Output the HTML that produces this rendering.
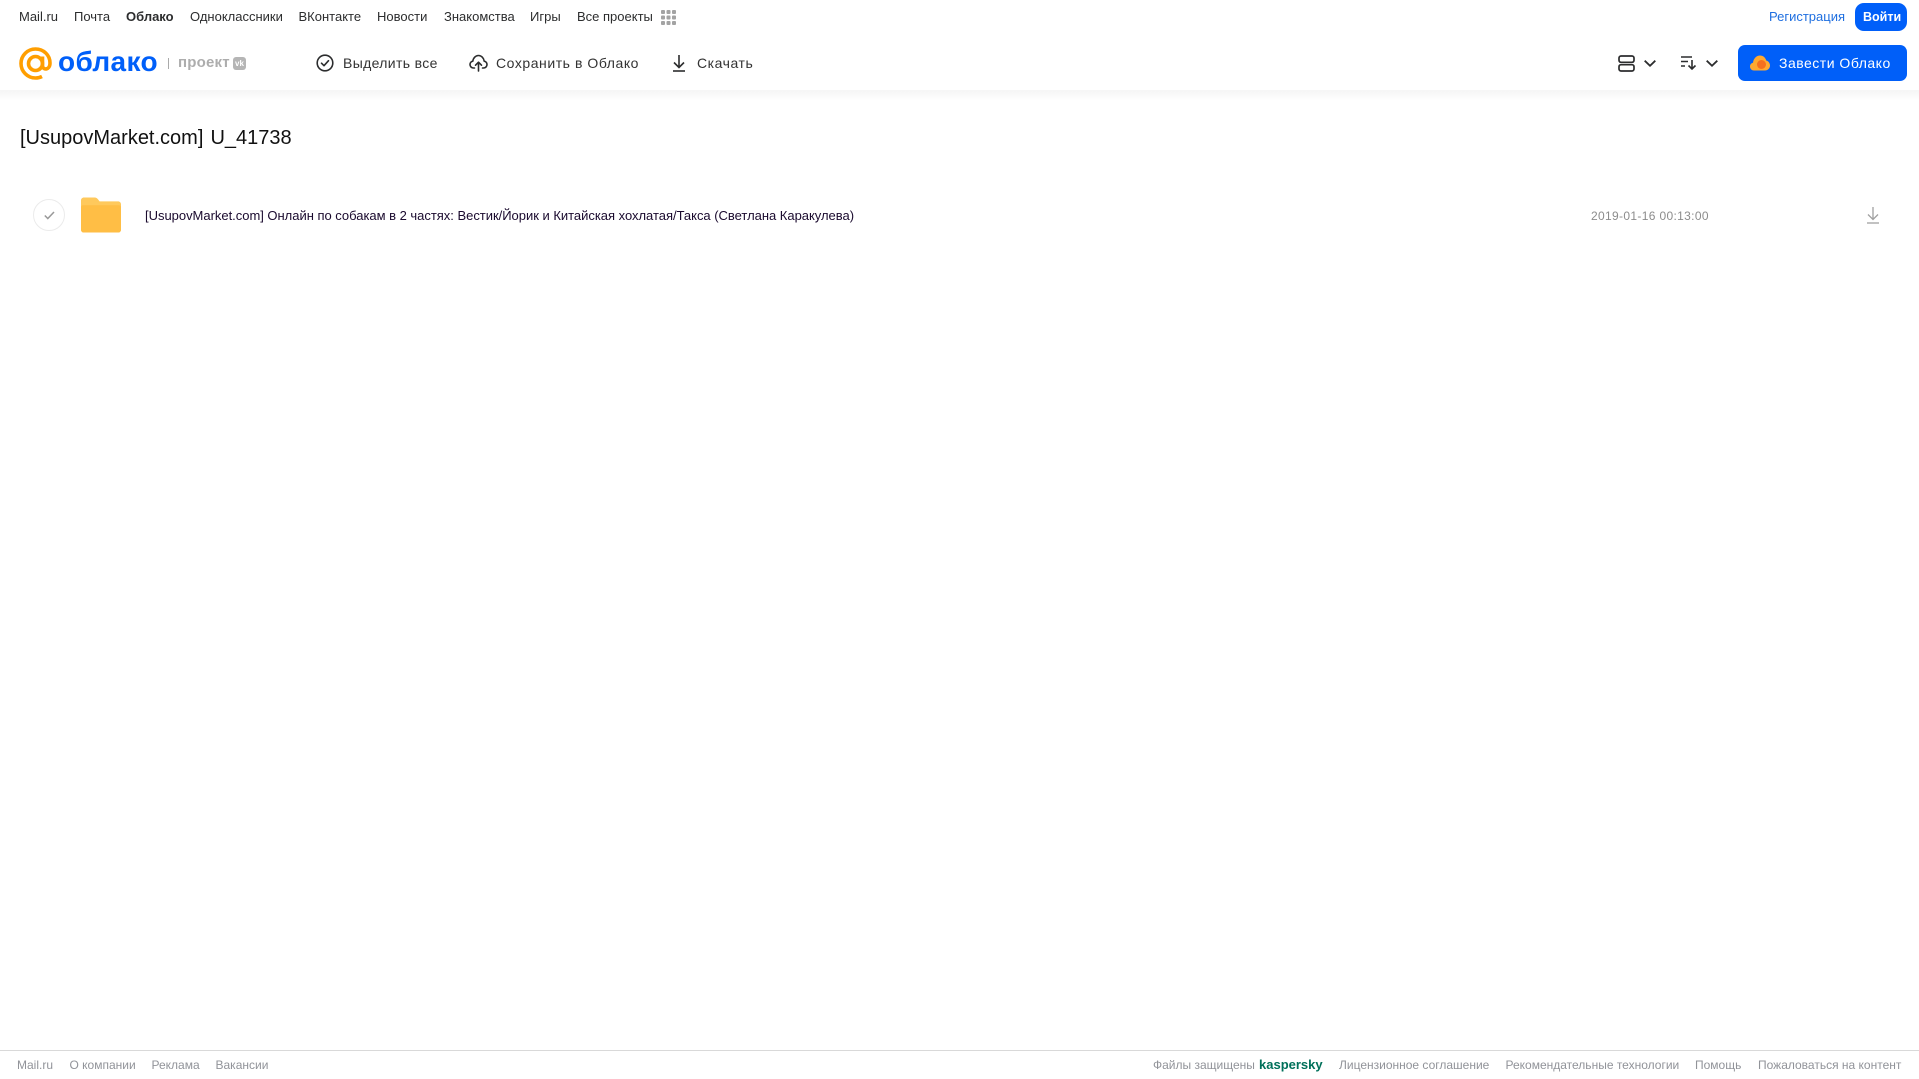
<!DOCTYPE html>
<html lang="ru"><head><meta charset="utf-8"><title>Облако</title>
<style>
html,body{margin:0;padding:0;background:#fff;width:1919px;height:1079px;overflow:hidden}
body{position:relative;font-family:"Liberation Sans",Arial,sans-serif}
.t{position:absolute;white-space:nowrap;line-height:16px}
.n{top:9px;font-size:13px;color:#2c2d2e;transform-origin:0 50%}
.b{top:55px;font-size:14px;color:#333;letter-spacing:.55px;line-height:16px}
.f{top:1057px;font-size:12px;color:#919399}
svg{position:absolute;overflow:visible}
</style></head><body>
<span class="t n" style="left:19px">Mail.ru</span>
<span class="t n" style="left:74px">Почта</span>
<span class="t n" style="left:126px;font-weight:bold">Облако</span>
<span class="t n" style="left:190px">Одноклассники</span>
<span class="t n" style="left:298.500px">ВКонтакте</span>
<span class="t n" style="left:377px">Новости</span>
<span class="t n" style="left:444px">Знакомства</span>
<span class="t n" style="left:530px">Игры</span>
<span class="t n" style="left:577px">Все проекты</span>
<svg style="left:661px;top:10px" width="15" height="15" fill="#a3a3a3"><rect x="0" y="0" width="4" height="4" rx="1"/><rect x="5.5" y="0" width="4" height="4" rx="1"/><rect x="11" y="0" width="4" height="4" rx="1"/><rect x="0" y="5.5" width="4" height="4" rx="1"/><rect x="5.5" y="5.5" width="4" height="4" rx="1"/><rect x="11" y="5.5" width="4" height="4" rx="1"/><rect x="0" y="11" width="4" height="4" rx="1"/><rect x="5.5" y="11" width="4" height="4" rx="1"/><rect x="11" y="11" width="4" height="4" rx="1"/></svg>
<span class="t n" style="left:1769px;color:#1f6fe0">Регистрация</span>
<div style="position:absolute;left:1855px;top:3px;width:52px;height:28px;border-radius:9px;background:#005ff9"></div>
<span class="t n" style="left:1863px;color:#fff;font-weight:bold;font-size:12.5px">Войти</span>

<div style="position:absolute;left:0;top:90px;width:1919px;height:11px;background:linear-gradient(#f5f5f5,#fff)"></div>

<svg style="left:19px;top:47px" width="33" height="33" viewBox="0 0 33 33" fill="none" stroke="#ff9e00" stroke-width="3.6"><circle cx="16.5" cy="16.5" r="7"/><path d="M23.5 9.5v9c0 5 7.5 5 7.5-2.5C31 8 24.500 2 16.500 2S2 8.500 2 16.500 8.500 31 16.500 31c2.500 0 4.500-.5 6.500-1.500"/></svg>
<span class="t" style="left:58px;top:45px;font-size:28px;line-height:34px;font-weight:bold;color:#005ff9;letter-spacing:.35px">облако</span>
<div style="position:absolute;left:168px;top:58px;width:1px;height:11px;background:#aaa"></div>
<span class="t" style="left:178px;top:54px;font-size:15px;line-height:18px;color:#adadad;font-weight:bold;letter-spacing:.2px">проект</span>
<div style="position:absolute;left:233px;top:57px;width:13px;height:13px;border-radius:3px;background:#b5b5b5;color:#fff;font-size:8px;font-weight:bold;line-height:13px;text-align:center">vk</div>

<svg style="left:316px;top:54px" width="18" height="18" viewBox="0 0 18 18" fill="none" stroke="#2c2d2e" stroke-width="1.600"><circle cx="9" cy="9" r="7.800"/><path d="M5.500 9.200l2.500 2.500 4.500-5" stroke-linecap="round" stroke-linejoin="round"/></svg>
<span class="t b" style="left:343px;letter-spacing:.35px">Выделить все</span>
<svg style="left:469px;top:54px" width="19" height="18" viewBox="0 0 19 18" fill="none" stroke="#2c2d2e" stroke-width="1.600" stroke-linecap="round" stroke-linejoin="round"><path d="M5.500 14H4.500C2.500 14 1 12.500 1 10.500 1 8.800 2.200 7.500 3.800 7.200 4.200 4 6.500 1.500 9.500 1.500S14.800 4 15.200 7.200C16.800 7.500 18 8.800 18 10.500 18 12.500 16.500 14 14.500 14H13.500"/><path d="M9.500 17V8.500M6.500 11.200l3-3 3 3"/></svg>
<span class="t b" style="left:496px">Сохранить в Облако</span>
<svg style="left:671px;top:54px" width="16" height="18" viewBox="0 0 16 18" fill="none" stroke="#2c2d2e" stroke-width="1.600"><path d="M8 1v12M3 8.500l5 5 5-5"/><path d="M2 17h12"/></svg>
<span class="t b" style="left:697px">Скачать</span>

<svg style="left:1618px;top:55px" width="17" height="17" viewBox="0 0 17 17" fill="none" stroke="#2c2d2e" stroke-width="1.700"><rect x="1" y="1" width="15" height="6.300" rx="2"/><rect x="1" y="9.700" width="15" height="6.300" rx="2"/></svg>
<svg style="left:1644px;top:60px" width="12" height="7" fill="none" stroke="#2c2d2e" stroke-width="1.800"><path d="M.7.700 6 5.800 11.300.7"/></svg>
<svg style="left:1681px;top:56px" width="16" height="14" viewBox="0 0 16 14" fill="none" stroke="#2c2d2e" stroke-width="1.400"><path d="M0 1h11M0 5.500h7M0 10h4"/><path d="M11 4v9M7.500 9.500 11 13l3.500-3.500" stroke-width="1.600"/></svg>
<svg style="left:1706px;top:60px" width="12" height="7" fill="none" stroke="#2c2d2e" stroke-width="1.800"><path d="M.7.700 6 5.800 11.300.7"/></svg>

<div style="position:absolute;left:1738px;top:45px;width:169px;height:36px;border-radius:7px;background:#005ff9"></div>
<svg style="left:1750px;top:55px" width="20" height="16" viewBox="0 0 20 16"><path d="M4 15.500C1.800 15.500 0 13.800 0 11.500 0 9.500 1.300 8 3 7.700 3.500 3.500 6.500 .5 10 .5c3 0 5.500 2 6.200 5C18.300 6 20 8 20 10.500c0 2.800-2.200 5-5 5z" fill="#ffa930"/><circle cx="11.500" cy="9.500" r="4.500" fill="#f5701f"/></svg>
<span class="t" style="left:1779px;top:55px;font-size:14px;line-height:16px;color:#fff;letter-spacing:.5px">Завести Облако</span>

<span class="t" style="left:20px;top:126px;font-size:20px;line-height:24px;color:#111;word-spacing:1.500px">[UsupovMarket.com] U_41738</span>

<div style="position:absolute;left:33px;top:199px;width:30px;height:30px;border:1px solid #ebebeb;border-radius:50%"></div>
<svg style="left:43.500px;top:211px" width="11" height="9" fill="none" stroke="#999" stroke-width="1.500"><path d="M.8 4.500 3.800 7.500 10 1"/></svg>
<svg style="left:81px;top:197px" width="40" height="36" viewBox="0 0 41 36"><path d="M0 3C0 1.300 1.300 0 3 0h11c1.500 0 2.500.8 3.500 2L19 4h19c1.700 0 3 1.300 3 3v26c0 1.700-1.300 3-3 3H3c-1.700 0-3-1.300-3-3z" fill="#ffc95c"/><path d="M0 10c0-1.200.8-2 2-2h37c1.200 0 2 .8 2 2v23c0 1.700-1.300 3-3 3H3c-1.700 0-3-1.300-3-3z" fill="#ffbe45"/></svg>
<span class="t" style="left:145px;top:208px;font-size:13px;color:#1a0a2e;letter-spacing:-.02px">[UsupovMarket.com] Онлайн по собакам в 2 частях: Вестик/Йорик и Китайская хохлатая/Такса (Светлана Каракулева)</span>
<span class="t" style="left:1591px;top:208px;font-size:12px;color:#8c8c8c;letter-spacing:.34px">2019-01-16 00:13:00</span>
<svg style="left:1866px;top:206px" width="14" height="18" viewBox="0 0 14 18" fill="none" stroke="#a0a0a0" stroke-width="1.300"><path d="M7 1v12M2 8.500l5 5 5-5"/><path d="M1 17h12"/></svg>

<div style="position:absolute;left:0;top:1050px;width:1919px;height:1px;background:#d9d9d9"></div>
<span class="t f" style="left:17px">Mail.ru</span>
<span class="t f" style="left:69.500px">О компании</span>
<span class="t f" style="left:151.500px">Реклама</span>
<span class="t f" style="left:215.500px">Вакансии</span>
<span class="t f" style="left:1153px">Файлы защищены</span>
<span class="t f" style="left:1259px;color:#00705a;font-weight:bold;font-size:13px">kaspersky</span>
<span class="t f" style="left:1339px">Лицензионное соглашение</span>
<span class="t f" style="left:1505.500px">Рекомендательные технологии</span>
<span class="t f" style="left:1695px">Помощь</span>
<span class="t f" style="left:1758px">Пожаловаться на контент</span>
</body></html>
